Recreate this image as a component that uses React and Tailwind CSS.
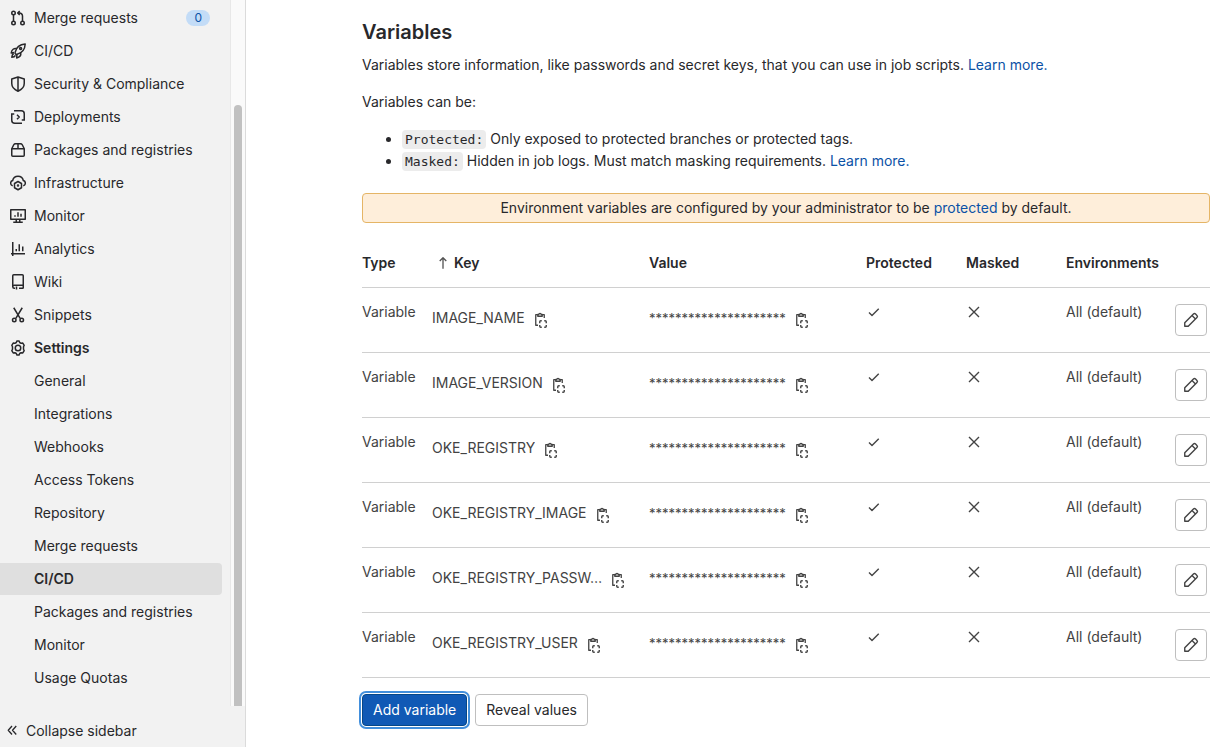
import React from "react";

const ICONS = {
  merge: (
    <>
      <circle cx="3.5" cy="3" r="1.75" />
      <circle cx="3.5" cy="13" r="1.75" />
      <circle cx="12.5" cy="13" r="1.75" />
      <path d="M3.5 5v6M12.5 11V6a3 3 0 0 0-3-3H8M9.7 1L7.7 3l2 2" />
    </>
  ),
  rocket: (
    <>
      <path d="M5.2 9.2C6 5.500 9 1.500 15.200 1c-.3 5.800-4 9.200-8 10.200a1.500 1.500 0 0 1-2-2z" />
      <path d="M6.500 5.500C4 5 1.700 6.500 1.200 10l3-.5M10.700 9.700c.5 2.500-1 4.600-4 5.200l.2-3.200M3.700 10.500c-1.300.7-1.800 2-1.900 3.700 1.500 0 3-.4 3.700-1.800" />
      <circle cx="10.600" cy="5.500" r="1" />
    </>
  ),
  shield: <path d="M8 1L1.750 3v4.500c0 3.500 2.500 6 6.250 7.700 3.750-1.700 6.250-4.200 6.250-7.700V3L8 1zM8 1v14" />,
  deploy: (
    <path d="M4 1.750h7.250a3 3 0 0 1 3 3V11M1.750 5v6.250a3 3 0 0 0 3 3H12M4.250 5H1M15 11h-3.250M7 5.750L9.250 8 7 10.250" />
  ),
  package: (
    <path d="M1.750 6.500v6.750a1 1 0 0 0 1 1h10.500a1 1 0 0 0 1-1V6.500M1.750 6.750l2-4a2 2 0 0 1 1.700-1h5.100a2 2 0 0 1 1.700 1l2 4zM8 1.750v5" />
  ),
  infra: (
    <>
      <path d="M2.750 10.750A2.700 2.700 0 0 1 2.700 5.500 5.400 5.400 0 0 1 13.300 5.500 2.700 2.700 0 0 1 13.250 10.750" />
      <path d="M8 6.500l3.500 2v4.250l-3.500 2-3.500-2V8.500L8 6.500z" />
      <circle cx="8" cy="10.600" r=".5" />
    </>
  ),
  monitor: (
    <path d="M.75 1.750h14.500v9.500H.75zM3.250 14.250h9.500M6.250 11.500v2.500M9.750 11.500v2.500M5 7.250v1.500M8 4.250v4.500M11 5.750v3" />
  ),
  chart: <path d="M2.750 1v14M1 12.750h14M6.250 8v2.250M9.250 3.250v7M12.750 5.500v4.750" />,
  wiki: (
    <path d="M2.750 13V1.750a1 1 0 0 1 1-1h8.500a1 1 0 0 1 1 1v9.500H4.250a1.500 1.500 0 0 0 0 3H5M9 14.250h4.500M13.250 11.250v3M6.500 12.500v3" />
  ),
  scissors: (
    <>
      <path d="M3.750.75l6.400 10.700M12.250.75l-6.400 10.700" />
      <circle cx="4.250" cy="13" r="1.75" />
      <circle cx="11.750" cy="13" r="1.75" />
    </>
  ),
  gear: (
    <>
      <path d="M6.300 2.500L7 .9h2l.7 1.600 1.400.8 1.700-.2 1.400 2.200-.7 1.500v2.400l.7 1.500-1.400 2.200-1.700-.2-1.400.8L9 15.100H7l-.7-1.600-1.400-.8-1.700.2-1.400-2.200.7-1.500V6.800l-.7-1.500 1.400-2.200 1.700.2z" />
      <circle cx="8" cy="8" r="2.750" />
    </>
  ),
  collapse: <path strokeWidth="1.300" d="M8 3L4.250 7.250 8 11.500M12.250 3L8.500 7.250l3.750 4.250" />,
  arrow: <path d="M8 14.500V2M4.250 5.750L8 2l3.750 3.750" />,
  copy: (
    <>
      <path strokeWidth="1.300" d="M5 2.650H2.750v10.600H5M9 2.650h2.250V6M4.750 4.250V2.500h1.100a1.150 1.150 0 0 1 2.300 0h1.100v1.750z" />
      <path strokeWidth="1.400" d="M6.750 11.250v-1.500a1 1 0 0 1 1-1h1M11.250 8.750h1a1 1 0 0 1 1 1v1.500M13.250 13v1.250a1 1 0 0 1-1 1h-1M8.750 15.250h-1a1 1 0 0 1-1-1V13" />
    </>
  ),
  check: <path strokeWidth="1.400" d="M3 8.500l3 3L12.750 4.700" />,
  close: <path strokeWidth="1.400" d="M3 3l10 10M13 3L3 13" />,
  pencil: <path strokeWidth="1.400" d="M1.750 14.250v-3.500l8.700-8.700a1.500 1.500 0 0 1 2.100 0l1.400 1.400a1.500 1.500 0 0 1 0 2.100l-8.700 8.700zM9 3.500L12.500 7" />,
};

function Icon({ name, className = "size-4" }) {
  return (
    <svg
      viewBox="0 0 16 16"
      fill="none"
      stroke="currentColor"
      strokeWidth="1.5"
      strokeLinejoin="round"
      aria-hidden="true"
      className={`shrink-0 ${className}`}
    >
      {ICONS[name]}
    </svg>
  );
}

const NAV = [
  ["merge", "Merge requests", "0"],
  ["rocket", "CI/CD"],
  ["shield", "Security & Compliance"],
  ["deploy", "Deployments"],
  ["package", "Packages and registries"],
  ["infra", "Infrastructure"],
  ["monitor", "Monitor"],
  ["chart", "Analytics"],
  ["wiki", "Wiki"],
  ["scissors", "Snippets"],
  ["gear", "Settings"],
];

const SETTINGS = [
  "General",
  "Integrations",
  "Webhooks",
  "Access Tokens",
  "Repository",
  "Merge requests",
  "CI/CD",
  "Packages and registries",
  "Monitor",
  "Usage Quotas",
];

const VARIABLES = [
  "IMAGE_NAME",
  "IMAGE_VERSION",
  "OKE_REGISTRY",
  "OKE_REGISTRY_IMAGE",
  "OKE_REGISTRY_PASSW…",
  "OKE_REGISTRY_USER",
];

const MASK = "*".repeat(21);

function Sidebar() {
  return (
    <aside className="sticky top-0 flex h-screen w-[246px] shrink-0 flex-col border-r border-[#dbdbdb] bg-[#f2f2f2]">
      <div className="flex min-h-0 flex-1">
        <nav aria-label="Project navigation" className="flex-1 overflow-hidden pt-0.5 pr-2">
          <ul className="flex flex-col gap-px">
            {NAV.map(([icon, label, count]) => (
              <li key={label}>
                <a
                  href="#"
                  className={`flex h-8 items-center gap-2 pr-3 pl-2.5 ${label === "Settings" ? "font-semibold" : ""}`}
                >
                  <Icon name={icon} />
                  <span className="flex-1">{label}</span>
                  {count && (
                    <span className="rounded-full bg-[#c3dcf7] px-2 text-xs leading-4 text-[#0b52a6]">{count}</span>
                  )}
                </a>
              </li>
            ))}
            {SETTINGS.map((label) => (
              <li key={label}>
                <a
                  href="#"
                  className={`flex h-8 items-center rounded-r pl-[34px] ${label === "CI/CD" ? "bg-[#dfdfdf] font-semibold" : ""}`}
                >
                  {label}
                </a>
              </li>
            ))}
          </ul>
        </nav>
        <div className="flex w-[15px] flex-col items-center border-l border-[#e8e8e8] bg-[#fafafa] pt-[105px]">
          <div className="w-2 flex-1 rounded-t-full bg-[#c1c1c1]" />
        </div>
      </div>
      <button type="button" className="flex items-center gap-1.5 pt-[15px] pb-1.5 pl-1">
        <Icon name="collapse" />
        <span>Collapse sidebar</span>
      </button>
    </aside>
  );
}

function Copyable({ children, label }) {
  return (
    <div className="flex items-center gap-2">
      {children}
      <button type="button" aria-label={label} className="mt-1 shrink-0">
        <Icon name="copy" />
      </button>
    </div>
  );
}

function Link({ children }) {
  return (
    <a href="#" className="text-[#0b52a6]">
      {children}
    </a>
  );
}

function Code({ children }) {
  return (
    <code className="mr-1 rounded bg-[#ececec] px-[3px] py-0.5 font-['DejaVu_Sans_Mono',monospace] text-[13px] leading-none">
      {children}
    </code>
  );
}

function VariablesTable() {
  return (
    <table className="mt-4 w-full table-fixed text-left">
      <colgroup>
        <col className="w-[70px]" />
        <col />
        <col />
        <col className="w-[100px]" />
        <col className="w-[100px]" />
        <col className="w-[109px]" />
        <col className="w-[35px]" />
      </colgroup>
      <thead>
        <tr className="h-12 border-b border-[#d0d0d0] [&>th]:font-semibold">
          <th>Type</th>
          <th>
            <span className="flex items-center gap-1 pl-1">
              <Icon name="arrow" className="size-3.5 text-[#525252]" />
              Key
            </span>
          </th>
          <th>Value</th>
          <th>Protected</th>
          <th>Masked</th>
          <th>Environments</th>
          <th aria-label="Actions" />
        </tr>
      </thead>
      <tbody className="text-[#434343]">
        {VARIABLES.map((name) => (
          <tr key={name} className="h-[65px] border-b border-[#d0d0d0] align-top">
            <td className="pt-3.5">Variable</td>
            <td className="pt-5 pr-4">
              <Copyable label="Copy key">
                <span className="truncate">{name}</span>
              </Copyable>
            </td>
            <td className="pt-5">
              <Copyable label="Copy value">
                <span className="text-[13px] leading-5">{MASK}</span>
              </Copyable>
            </td>
            <td className="pt-4">
              <Icon name="check" />
            </td>
            <td className="pt-4">
              <Icon name="close" />
            </td>
            <td className="pt-3.5">All (default)</td>
            <td className="pt-4">
              <button
                type="button"
                aria-label="Edit"
                className="flex size-8 items-center justify-center rounded border border-[#bfbfbf] bg-white"
              >
                <Icon name="pencil" />
              </button>
            </td>
          </tr>
        ))}
      </tbody>
    </table>
  );
}

export default function App() {
  return (
    <div className="flex min-h-screen bg-white font-['Inter','Liberation_Sans',sans-serif] text-sm leading-5 text-[#28282b]">
      <Sidebar />
      <main className="min-w-0 flex-1 pt-4 pr-[22px] pl-[116px]">
        <h1 className="text-xl leading-8 font-semibold">Variables</h1>
        <p className="mt-[7px]">
          Variables store information, like passwords and secret keys, that you can use in job scripts.{" "}
          <Link>Learn more.</Link>
        </p>
        <p className="mt-[17px]">Variables can be:</p>
        <ul className="mt-4 list-disc pl-10 leading-[22px]">
          <li>
            <Code>Protected:</Code>Only exposed to protected branches or protected tags.
          </li>
          <li>
            <Code>Masked:</Code>Hidden in job logs. Must match masking requirements. <Link>Learn more.</Link>
          </li>
        </ul>
        <p className="mt-[21px] rounded-sm border border-[#e5b566] bg-[#feeeda] py-1 text-center">
          Environment variables are configured by your administrator to be <Link>protected</Link> by default.
        </p>
        <VariablesTable />
        <div className="mt-4 flex gap-2 pb-5">
          <button
            type="button"
            className="h-8 rounded border border-[#064787] bg-[#1059b5] px-2.5 text-white ring-2 ring-[#428fdc] ring-offset-1"
          >
            Add variable
          </button>
          <button type="button" className="h-8 rounded border border-[#bfbfbf] bg-white px-2.5">
            Reveal values
          </button>
        </div>
      </main>
    </div>
  );
}
